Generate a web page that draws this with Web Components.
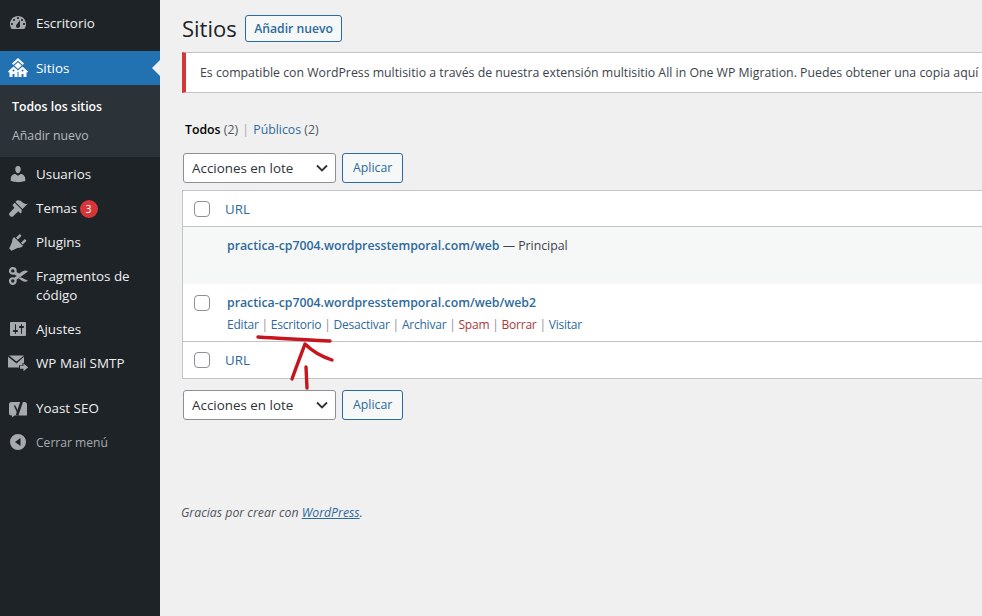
<!DOCTYPE html>
<html lang="es">
<head>
<meta charset="utf-8">
<title>Sitios</title>
<style>
  html, body { margin: 0; height: 100%; overflow: hidden; }
  body { background: #f0f0f1; font: 12.3px/1.4 "Open Sans", "Noto Sans", sans-serif; color: #3c434a; }
</style>
</head>
<body>
<wp-app>
  <wp-sidebar slot="side">
    <wp-menu-item label="Escritorio" icon="dashboard" style="--top:6px;--bottom:11px"></wp-menu-item>
    <wp-menu-item label="Sitios" icon="sites" current></wp-menu-item>
    <wp-submenu>
      <a class="x" data-on>Todos los sitios</a>
      <a class="x">Añadir nuevo</a>
    </wp-submenu>
    <wp-menu-item label="Usuarios" icon="users"></wp-menu-item>
    <wp-menu-item label="Temas" icon="themes" badge="3"></wp-menu-item>
    <wp-menu-item label="Plugins" icon="plugins"></wp-menu-item>
    <wp-menu-item label="Fragmentos de código" icon="scissors"></wp-menu-item>
    <wp-menu-item label="Ajustes" icon="settings"></wp-menu-item>
    <wp-menu-item label="WP Mail SMTP" icon="mail" style="--bottom:11px"></wp-menu-item>
    <wp-menu-item label="Yoast SEO" icon="yoast"></wp-menu-item>
    <wp-menu-item label="Cerrar menú" icon="collapse" dim></wp-menu-item>
  </wp-sidebar>
  <wp-sites-page></wp-sites-page>
</wp-app>

<script>
const ICONS = {
  dashboard: '<path fill-rule="evenodd" d="M3.760 16h12.480c1.100-1.370 1.760-3.110 1.760-5 0-4.420-3.580-8-8-8s-8 3.580-8 8c0 1.890.66 3.630 1.760 5zM10 4c.55 0 1 .45 1 1s-.45 1-1 1-1-.45-1-1 .45-1 1-1zM6 6c.55 0 1 .45 1 1s-.45 1-1 1-1-.45-1-1 .45-1 1-1zm8 0c.55 0 1 .45 1 1s-.45 1-1 1-1-.45-1-1 .45-1 1-1zm-5.370 5.550L12 7v6c0 1.100-.9 2-2 2s-2-.9-2-2c0-.57.24-1.080.63-1.450zM4 10c.55 0 1 .45 1 1s-.45 1-1 1-1-.45-1-1 .45-1 1-1zm12 0c.55 0 1 .45 1 1s-.45 1-1 1-1-.45-1-1 .45-1 1-1z"/>',
  sites: '<path d="M10 0 4 5.500 5.300 7 10 2.700 14.700 7 16 5.500z"/><path d="M10 4.200 6.300 7.600 10 11l3.700-3.400z"/><path fill-rule="evenodd" d="M5.500 8.500 0 13.500l1 1.200.5-.4V19h3v-3h2v3h3v-5l.5-.5.5.5v5h3v-3h2v3h3v-4.700l.5.4 1-1.200-5.500-5-4.500 4zM5.500 11.500a1 1 0 1 1 0 2 1 1 0 0 1 0-2zm9 0a1 1 0 1 1 0 2 1 1 0 0 1 0-2z"/>',
  users: '<path d="M10 9.250c-2.270 0-2.730-3.440-2.730-3.440C7 4.020 7.820 2 9.970 2c2.160 0 2.980 2.020 2.710 3.810 0 0-.41 3.440-2.680 3.440zm0 2.570L12.720 10c2.390 0 4.520 2.330 4.520 4.530v2.490s-3.650 1.130-7.240 1.130c-3.650 0-7.240-1.130-7.240-1.130v-2.490c0-2.250 1.940-4.480 4.470-4.480z"/>',
  themes: '<path d="M14.480 11.060L7.410 3.990l1.500-1.500c.5-.56 2.300-.47 3.510.32 1.210.8 1.430 1.280 2.910 2.100 1.180.64 2.450 1.260 4.450.85zm-.71.710L6.700 4.700 4.930 6.470c-.39.39-.39 1.020 0 1.410l1.060 1.060c.39.39.39 1.020 0 1.410l-4.300 4.300c-.78.78-.78 2.050 0 2.830l.71.71c.78.78 2.050.78 2.830 0l4.300-4.300c.39-.39 1.020-.39 1.410 0l1.060 1.060c.39.39 1.020.39 1.410 0z"/>',
  plugins: '<path d="M13.110 4.360L9.870 7.600 8 5.730l3.240-3.240c.35-.34 1.050-.2 1.560.32.52.51.66 1.210.31 1.550zM18.110 9.360l-3.240 3.240L13 10.730l3.240-3.240c.35-.34 1.050-.2 1.560.32.52.51.66 1.210.31 1.550zM5.110 6.130l.91-1.120 9.010 9.010-1.190.84c-.71.71-2.630 1.160-3.820 1L3.500 18.800 1.200 16.500l2.900-6.550c-.15-1.190.3-3.110 1.010-3.820z"/>',
  scissors: '<path fill-rule="evenodd" d="M4.800 1a3.900 3.900 0 1 0 1.500 7.500L8.800 10l-2.500 1.500A3.900 3.900 0 1 0 8.700 15c0-.5-.1-.9-.2-1.300L20 5.500c-1.700-1.200-3.700-1.200-5.300-.2l-3.500 2.300-2.700-1.700c.2-.4.2-.8.2-1A3.900 3.900 0 0 0 4.800 1zm0 2.200a1.700 1.700 0 1 1 0 3.400 1.700 1.700 0 0 1 0-3.400zm0 10.100a1.700 1.700 0 1 1 0 3.400 1.700 1.700 0 0 1 0-3.400z"/><path d="m12.700 11.300-2 1.300 3.800 2.400c1.700 1 3.700 1 5.500-.2z"/>',
  settings: '<path fill-rule="evenodd" d="M18 16V4c0-.55-.45-1-1-1H3c-.55 0-1 .45-1 1v12c0 .55.45 1 1 1h14c.55 0 1-.45 1-1zM8 11h1c.55 0 1 .45 1 1s-.45 1-1 1H8v1.500c0 .28-.22.5-.5.5s-.5-.22-.5-.5V13H6c-.55 0-1-.45-1-1s.45-1 1-1h1V5.500c0-.28.22-.5.5-.5s.5.22.5.5V11zm5-2h-1c-.55 0-1-.45-1-1s.45-1 1-1h1V5.500c0-.28.22-.5.5-.5s.5.22.5.5V7h1c.55 0 1 .45 1 1s-.45 1-1 1h-1v5.500c0 .28-.22.5-.5.5s-.5-.22-.5-.5V9z"/>',
  mail: '<path d="M1 2.500h15L8.500 8.500z"/><path d="M0 3.800V14.500h11v-2.300h3.500V9.500l1.500 1V3.800L8.500 10.500z"/><path d="M15.500 10.500v2.300H12v3h3.500v2.500l4.700-4z"/>',
  yoast: '<path d="M3.500 4H16.500A2.500 2.500 0 0 1 19 6.500V17.500H6.500L4 19.500V17.500H3.500A2.500 2.500 0 0 1 1 15V6.500A2.500 2.500 0 0 1 3.500 4z"/><path d="M6.500 7.500 9.800 14.500" stroke="#1d2327" stroke-width="1.500" fill="none"/><path d="M14.700.5 9 17.500" stroke="#1d2327" stroke-width="2.600" fill="none"/>',
  collapse: '<path fill-rule="evenodd" d="M10 2a8 8 0 1 1 0 16 8 8 0 0 1 0-16zm2.500 4L7 10l5.500 4z"/>'
};

class WpApp extends HTMLElement {
  constructor() {
    super();
    this.attachShadow({ mode: 'open' }).innerHTML = `
      <style>
        :host { display: flex; height: 616px; width: 982px; overflow: hidden; }
        .side { flex: 0 0 160px; background: #1d2327; }
        .main { flex: 1; min-width: 0; }
      </style>
      <div class="side"><slot name="side"></slot></div>
      <div class="main"><slot></slot></div>`;
  }
}

class WpSidebar extends HTMLElement {
  constructor() {
    super();
    this.attachShadow({ mode: 'open' }).innerHTML = `
      <style>
        :host { display: flex; flex-direction: column; }
      </style>
      <slot></slot>`;
  }
}

class WpMenuItem extends HTMLElement {
  constructor() {
    super();
    const label = this.getAttribute('label');
    const badge = this.getAttribute('badge');
    const icon = ICONS[this.getAttribute('icon')];
    this.attachShadow({ mode: 'open' }).innerHTML = `
      <style>
        :host { display: block; margin-top: var(--top, 0); margin-bottom: var(--bottom, 0); color: #f0f0f1; }
        :host([dim]) { color: #a7aaad; }
        :host([current]) { background: #2271b1; color: #fff; }
        .row { position: relative; display: flex; gap: 8px; padding: 7px 12px 7px 8px; line-height: 19px; min-height: 20px; }
        svg { flex: 0 0 20px; width: 20px; height: 20px; fill: #a7aaad; overflow: visible; }
        :host([current]) svg { fill: #fff; }
        :host([current]) .row::after {
          content: ""; position: absolute; right: 0; top: 50%; margin-top: -8px;
          border: 8px solid transparent; border-right-color: #f0f0f1; border-left-width: 0;
        }
        .label { flex: 1; font-size: 13.400px; padding-top: 1px; }
        :host([dim]) .label { font-size: 12.100px; }
        .badge {
          display: inline-block; margin-left: -1px; width: 18px; height: 18px; border-radius: 9px;
          background: #d63638; color: #fff; font-size: 10.500px; line-height: 18px; text-align: center; vertical-align: 0;
        }
      </style>
      <div class="row">
        <svg viewBox="0 0 20 20" aria-hidden="true">${icon}</svg>
        <span class="label">${label}${badge ? ` <span class="badge">${badge}</span>` : ''}</span>
      </div>`;
  }
}

class WpSubmenu extends HTMLElement {
  constructor() {
    super();
    const items = [...this.querySelectorAll('a')].map(a =>
      `<div class="${a.hasAttribute('data-on') ? 'on' : ''}">${a.textContent}</div>`).join('');
    this.attachShadow({ mode: 'open' }).innerHTML = `
      <style>
        :host { display: block; background: #2c3338; padding: 7px 0; font-size: 12.300px; color: #b4b9be; }
        div { padding: 5px 12px; line-height: 19px; }
        .on { color: #fff; font-weight: 600; }
      </style>${items}`;
  }
}

class WpButton extends HTMLElement {
  constructor() {
    super();
    this.attachShadow({ mode: 'open' }).innerHTML = `
      <style>
        :host { display: inline-flex; box-sizing: border-box; align-items: center; height: 30px; padding: 0 10px;
          border: 1px solid #2a6a9e; border-radius: 3px; background: #f6f7f7; color: #2d6a9b; font-size: 12.300px; }
        :host([outline]) { height: 27px; padding: 0 8.500px; font-weight: 600; font-size: 12.200px; }
      </style>
      <slot></slot>`;
  }
}

class WpBulkBar extends HTMLElement {
  constructor() {
    super();
    this.attachShadow({ mode: 'open' }).innerHTML = `
      <style>
        :host { display: flex; gap: 6px; align-items: center; }
        .select { box-sizing: border-box; width: 153px; height: 30px; display: flex; align-items: center; justify-content: space-between;
          padding: 0 5px 0 8px; background: #fff; border: 1px solid #8c8f94; border-radius: 3px; font-size: 13.400px; color: #2c3338; }
        svg { width: 16px; height: 16px; fill: none; stroke: #2c3338; stroke-width: 1.800; }
      </style>
      <div class="select">Acciones en lote
        <svg viewBox="0 0 16 16"><path d="m3 5.500 5 5 5-5"/></svg>
      </div>
      <wp-button>Aplicar</wp-button>`;
  }
}

class WpCheck extends HTMLElement {
  constructor() {
    super();
    this.attachShadow({ mode: 'open' }).innerHTML = `
      <style>
        :host { display: block; box-sizing: border-box; width: 16px; height: 16px; border: 1px solid #8c8f94; border-radius: 4px; background: #fff; flex: none; }
      </style>`;
  }
}

class WpSitesPage extends HTMLElement {
  constructor() {
    super();
    this.attachShadow({ mode: 'open' }).innerHTML = `
      <style>
        :host { display: block; padding-left: 20px; font-size: 12.300px; color: #3c434a; }
        a { color: #2d6a9b; text-decoration: none; }
        .head { display: flex; align-items: center; gap: 8px; height: 29px; margin: 14px 0 0 2px; }
        h1 { margin: 0; font-size: 22px; font-weight: 400; line-height: 29px; color: #1d2327; }
        .notice { box-sizing: border-box; margin: 9px 0 0 2px; width: 800px; height: 41px; display: flex; align-items: center; white-space: nowrap;
          background: #fff; border: 1px solid #c3c4c7; border-right: 0; border-left: 4px solid #d63638; padding-left: 14px; font-size: 12.300px; }
        .views { margin: 27px 0 0 5px; line-height: 20px; color: #50575e; }
        .views b { color: #000; font-weight: 600; }
        .views i { font-style: normal; color: #a7aaad; padding: 0 1px; }
        .bulk { margin-left: 3px; }
        .top { margin-top: 13px; }
        .table { margin: 7px 0 0 2px; width: calc(100% + 60px); background: #fff; border: 1px solid #c3c4c7; }
        .hrow { display: flex; align-items: center; gap: 15px; height: 35px; padding-left: 11px; font-size: 13.300px; }
        .hrow a { padding-top: 1px; }
        .hrow.head-row { border-bottom: 1px solid #c3c4c7; }
        .hrow.foot-row { border-top: 1px solid #c3c4c7; height: 36px; }
        .site { display: flex; padding-left: 11px; height: 57px; }
        .site.main-site { background: #f6f7f7; }
        .cell { margin-left: 17px; padding-top: 9px; }
        .check-gap { width: 16px; flex: none; padding-top: 11px; }
        .name { font-weight: 600; line-height: 20px; }
        .acts { margin-top: 2px; line-height: 20px; color: #8c8f94; font-size: 12px; letter-spacing: -.22px; }
        .acts .del { color: #a8383a; }
        .foot { margin: 84px 0 0 1px; font-style: italic; color: #50575e; font-size: 12.300px; }
        .foot a { text-decoration: underline; }
        .ink { position: absolute; left: 0; top: 0; width: 982px; height: 616px; pointer-events: none; fill: none; stroke: #c5161d; stroke-width: 3.400; stroke-linecap: round; stroke-linejoin: round; }
      </style>
      <div class="head"><h1>Sitios</h1><wp-button outline>Añadir nuevo</wp-button></div>
      <div class="notice">Es compatible con WordPress multisitio a través de nuestra extensión multisitio All in One WP Migration. Puedes obtener una copia aquí</div>
      <div class="views"><b>Todos</b> (2) <i>|</i> <a href="#">Públicos</a> (2)</div>
      <wp-bulk-bar class="bulk top"></wp-bulk-bar>
      <div class="table">
        <div class="hrow head-row"><wp-check></wp-check><a href="#">URL</a></div>
        <div class="site main-site">
          <div class="check-gap"></div>
          <div class="cell"><a class="name" href="#">practica-cp7004.wordpresstemporal.com/web</a> — Principal</div>
        </div>
        <div class="site sub">
          <div class="check-gap"><wp-check></wp-check></div>
          <div class="cell">
            <a class="name" href="#">practica-cp7004.wordpresstemporal.com/web/web2</a>
            <div class="acts"><a href="#">Editar</a> | <a href="#">Escritorio</a> | <a href="#">Desactivar</a> | <a href="#">Archivar</a> | <a class="del" href="#">Spam</a> | <a class="del" href="#">Borrar</a> | <a href="#">Visitar</a></div>
          </div>
        </div>
        <div class="hrow foot-row"><wp-check></wp-check><a href="#">URL</a></div>
      </div>
      <wp-bulk-bar class="bulk" style="margin-top:11px"></wp-bulk-bar>
      <div class="foot">Gracias por crear con <a href="#">WordPress</a>.</div>
      <svg class="ink" viewBox="0 0 982 616">
        <path d="M258 337C280 338.500 310 340 330 341"/>
        <path d="M292 379C297 365 302 352 305 344C311 350 320 356 332 360"/>
        <path d="M306 367L307 388"/>
      </svg>`;
  }
}

customElements.define('wp-app', WpApp);
customElements.define('wp-sidebar', WpSidebar);
customElements.define('wp-menu-item', WpMenuItem);
customElements.define('wp-submenu', WpSubmenu);
customElements.define('wp-button', WpButton);
customElements.define('wp-bulk-bar', WpBulkBar);
customElements.define('wp-check', WpCheck);
customElements.define('wp-sites-page', WpSitesPage);
</script>
</body>
</html>
